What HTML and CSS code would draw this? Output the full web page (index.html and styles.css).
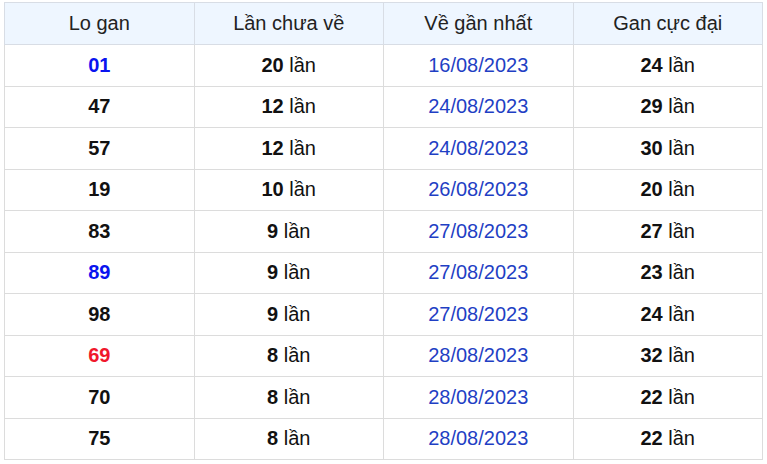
FILE: index.html
```html
<!DOCTYPE html>
<html lang="vi">
<head>
<meta charset="utf-8">
<link rel="stylesheet" href="styles.css">
</head>
<body>
<div class="wrap">
<table class="gan">
<thead>
<tr><th>Lo gan</th><th>Lần chưa về</th><th>Về gần nhất</th><th>Gan cực đại</th></tr>
</thead>
<tbody>
<tr><td class="num blue">01</td><td><b>20</b> lần</td><td class="date">16/08/2023</td><td><b>24</b> lần</td></tr>
<tr><td class="num">47</td><td><b>12</b> lần</td><td class="date">24/08/2023</td><td><b>29</b> lần</td></tr>
<tr><td class="num">57</td><td><b>12</b> lần</td><td class="date">24/08/2023</td><td><b>30</b> lần</td></tr>
<tr><td class="num">19</td><td><b>10</b> lần</td><td class="date">26/08/2023</td><td><b>20</b> lần</td></tr>
<tr><td class="num">83</td><td><b>9</b> lần</td><td class="date">27/08/2023</td><td><b>27</b> lần</td></tr>
<tr><td class="num blue">89</td><td><b>9</b> lần</td><td class="date">27/08/2023</td><td><b>23</b> lần</td></tr>
<tr><td class="num">98</td><td><b>9</b> lần</td><td class="date">27/08/2023</td><td><b>24</b> lần</td></tr>
<tr><td class="num red">69</td><td><b>8</b> lần</td><td class="date">28/08/2023</td><td><b>32</b> lần</td></tr>
<tr><td class="num">70</td><td><b>8</b> lần</td><td class="date">28/08/2023</td><td><b>22</b> lần</td></tr>
<tr><td class="num">75</td><td><b>8</b> lần</td><td class="date">28/08/2023</td><td><b>22</b> lần</td></tr>
</tbody>
</table>
</div>
</body>
</html>
```
FILE: styles.css
```css
html, body {
  margin: 0;
  padding: 0;
  background: #fff;
}
.wrap {
  padding: 2px 4px;
}
.gan {
  width: 759px;
  border-collapse: collapse;
  table-layout: fixed;
  font-family: "Liberation Sans", Arial, sans-serif;
  font-size: 20px;
  color: #222;
}
.gan th, .gan td {
  border: 1px solid #dcdcdc;
  text-align: center;
  padding: 0;
}
.gan th {
  height: 41px;
  background: #eef6ff;
  font-weight: normal;
  color: #222;
  border-color: #d8dde5;
}
.gan td {
  height: 40.5px;
  color: #111;
}
.gan td b {
  font-weight: bold;
  color: #111;
}
.gan td.num {
  font-weight: bold;
}
.gan td.blue {
  color: #0a14ef;
}
.gan td.red {
  color: #f0182c;
}
.gan td.date {
  color: #1f3fc4;
}
```
